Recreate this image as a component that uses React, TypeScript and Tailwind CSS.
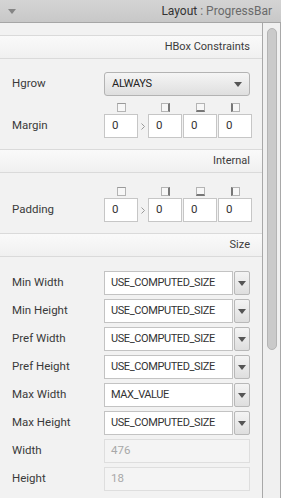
import React from 'react';

const font = { fontFamily: 'Roboto, "Open Sans", sans-serif' };

const Section: React.FC<{ title: string }> = ({ title }) => (
  <div className="h-[24px] border-y border-[#dadada] bg-gradient-to-b from-[#fafafa] to-[#f0f0f0] flex items-center justify-end pr-[12px] text-[11px] text-[#3c3c3c]">
    {title}
  </div>
);

const Caret: React.FC<{ className?: string }> = ({ className }) => (
  <svg width="8" height="5" viewBox="0 0 8 5" className={className}>
    <path d="M0 0 H8 L4 5 Z" fill="#555" />
  </svg>
);

const Box: React.FC<{ side: 'top' | 'right' | 'bottom' | 'left' }> = ({ side }) => {
  const cls =
    side === 'top'
      ? 'border-t-[#9a9a9a]'
      : side === 'right'
      ? 'border-r-2 border-r-[#777]'
      : side === 'bottom'
      ? 'border-b-2 border-b-[#777]'
      : 'border-l-2 border-l-[#777]';
  return <div className={`w-[9px] h-[9px] border border-[#b4b4b4] bg-[#f7f7f7] ${cls}`} />;
};

const Insets: React.FC<{ label: string; top: string }> = ({ label, top }) => (
  <div className={`flex items-end ${top}`}>
    <div className="w-[104px] pl-[12px] h-[24px] flex items-center text-[11.5px] text-[#3a3a3a]">{label}</div>
    <div className="flex flex-col">
      <div className="flex h-[11px] items-start">
        <div className="w-[34px] flex justify-center"><Box side="top" /></div>
        <div className="w-[9px]" />
        <div className="w-[34px] flex justify-center ml-[1px]"><Box side="right" /></div>
        <div className="w-[34px] flex justify-center ml-[1px]"><Box side="bottom" /></div>
        <div className="w-[34px] flex justify-center ml-[1px]"><Box side="left" /></div>
      </div>
      <div className="flex h-[24px] items-center">
        <div className="w-[34px] h-[24px] border border-[#c6c6c6] bg-white pl-[7px] flex items-center text-[11.5px] text-[#333]">0</div>
        <div className="w-[9px] flex justify-center">
          <svg width="4" height="7" viewBox="0 0 4 7"><path d="M0.5 0.5 L3.5 3.5 L0.5 6.5" stroke="#999" fill="none" /></svg>
        </div>
        {[0, 1, 2].map((i) => (
          <div key={i} className="w-[34px] ml-[1px] h-[24px] border border-[#c6c6c6] bg-white pl-[7px] flex items-center text-[11.5px] text-[#333]">0</div>
        ))}
      </div>
    </div>
  </div>
);

const SizeRow: React.FC<{ label: string; value: string }> = ({ label, value }) => (
  <div className="flex items-center h-[28px]">
    <div className="w-[104px] pl-[12px] text-[11.5px] text-[#3a3a3a]">{label}</div>
    <div className="w-[129px] h-[24px] border border-[#c3c3c3] bg-white pl-[6px] flex items-center text-[11px] tracking-[-0.4px] text-[#333] overflow-hidden whitespace-nowrap">{value}</div>
    <div className="w-[16px] h-[24px] ml-[1px] border border-[#b8b8b8] rounded-[2px] bg-gradient-to-b from-[#f4f4f4] to-[#dedede] flex items-center justify-center">
      <Caret />
    </div>
  </div>
);

const ReadRow: React.FC<{ label: string; value: string }> = ({ label, value }) => (
  <div className="flex items-center h-[28px]">
    <div className="w-[104px] pl-[12px] text-[11.5px] text-[#3a3a3a]">{label}</div>
    <div className="w-[146px] h-[24px] border border-[#dedede] bg-[#f4f4f4] pl-[6px] flex items-center text-[11.5px] text-[#a8a8a8]">{value}</div>
  </div>
);

export default function App() {
  return (
    <div className="w-[281px] h-[498px] overflow-hidden bg-[#f2f2f2] flex flex-col" style={font}>
      <div className="h-[23px] shrink-0 bg-gradient-to-b from-[#d4d4d4] to-[#c8c8c8] border-b border-[#a6a6a6] flex items-center justify-between pl-[8px] pr-[9px]">
        <Caret className="opacity-60" />
        <div className="text-[12px] text-[#333]">
          Layout <span className="text-[#6a6a6a]">: ProgressBar</span>
        </div>
      </div>
      <div className="flex-1 flex min-h-0">
        <div className="flex-1 flex flex-col">
          <div className="h-[12px] shrink-0" />
          <Section title="HBox Constraints" />
          <div className="flex items-center h-[24px] mt-[13px]">
            <div className="w-[104px] pl-[12px] text-[11.5px] text-[#3a3a3a]">Hgrow</div>
            <div className="w-[146px] h-[24px] border border-[#b3b3b3] rounded-[3px] bg-gradient-to-b from-[#f5f5f5] to-[#dfdfdf] flex items-center justify-between pl-[7px] pr-[7px] text-[11px] tracking-[-0.3px] text-[#222]">
              ALWAYS
              <Caret />
            </div>
          </div>
          <Insets label="Margin" top="pt-[7px]" />
          <div className="h-[11px] shrink-0" />
          <Section title="Internal" />
          <Insets label="Padding" top="pt-[14px]" />
          <div className="h-[11px] shrink-0" />
          <Section title="Size" />
          <div className="h-[12px] shrink-0" />
          <SizeRow label="Min Width" value="USE_COMPUTED_SIZE" />
          <SizeRow label="Min Height" value="USE_COMPUTED_SIZE" />
          <SizeRow label="Pref Width" value="USE_COMPUTED_SIZE" />
          <SizeRow label="Pref Height" value="USE_COMPUTED_SIZE" />
          <SizeRow label="Max Width" value="MAX_VALUE" />
          <SizeRow label="Max Height" value="USE_COMPUTED_SIZE" />
          <ReadRow label="Width" value="476" />
          <ReadRow label="Height" value="18" />
        </div>
        <div className="w-[19px] shrink-0 border-l border-r border-[#a8a8a8] bg-[#f0f0f0] pt-[5px] flex justify-center">
          <div className="w-[10px] h-[322px] ml-[1px] rounded-full border border-[#b4b4b4] bg-[#cacaca]" />
        </div>
      </div>
    </div>
  );
}
